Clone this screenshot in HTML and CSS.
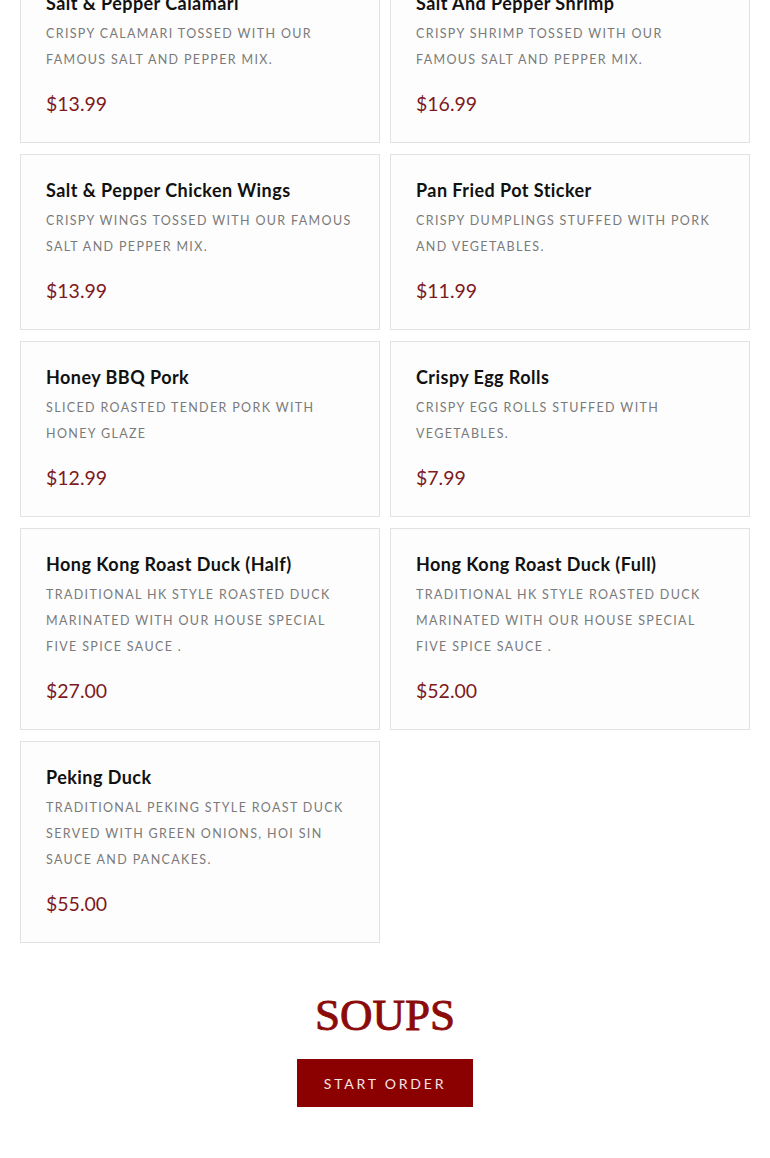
FILE: index.html
```html
<!DOCTYPE html>
<html lang="en">
<head>
<meta charset="utf-8">
<title>Menu</title>
<link rel="stylesheet" href="styles.css">
</head>
<body>
<main class="page">
  <section class="menu-grid">
    <article class="item">
      <h3 class="item-name">Salt &amp; Pepper Calamari</h3>
      <p class="item-desc">Crispy calamari tossed with our famous salt and pepper mix.</p>
      <p class="item-price">$13.99</p>
    </article>
    <article class="item">
      <h3 class="item-name">Salt And Pepper Shrimp</h3>
      <p class="item-desc">Crispy shrimp tossed with our famous salt and pepper mix.</p>
      <p class="item-price">$16.99</p>
    </article>
    <article class="item">
      <h3 class="item-name">Salt &amp; Pepper Chicken Wings</h3>
      <p class="item-desc">Crispy wings tossed with our famous salt and pepper mix.</p>
      <p class="item-price">$13.99</p>
    </article>
    <article class="item">
      <h3 class="item-name">Pan Fried Pot Sticker</h3>
      <p class="item-desc">Crispy dumplings stuffed with pork and vegetables.</p>
      <p class="item-price">$11.99</p>
    </article>
    <article class="item">
      <h3 class="item-name">Honey BBQ Pork</h3>
      <p class="item-desc">Sliced roasted tender pork with honey glaze</p>
      <p class="item-price">$12.99</p>
    </article>
    <article class="item">
      <h3 class="item-name">Crispy Egg Rolls</h3>
      <p class="item-desc">Crispy egg rolls stuffed with vegetables.</p>
      <p class="item-price">$7.99</p>
    </article>
    <article class="item">
      <h3 class="item-name">Hong Kong Roast Duck (Half)</h3>
      <p class="item-desc">Traditional HK style roasted duck marinated with our house special five spice sauce .</p>
      <p class="item-price">$27.00</p>
    </article>
    <article class="item">
      <h3 class="item-name">Hong Kong Roast Duck (Full)</h3>
      <p class="item-desc">Traditional HK style roasted duck marinated with our house special five spice sauce .</p>
      <p class="item-price">$52.00</p>
    </article>
    <article class="item">
      <h3 class="item-name">Peking Duck</h3>
      <p class="item-desc">Traditional Peking style roast duck served with green onions, hoi sin sauce and pancakes.</p>
      <p class="item-price">$55.00</p>
    </article>
  </section>
  <section class="next-section">
    <h2 class="section-title">SOUPS</h2>
    <a class="order-btn" href="#">START ORDER</a>
  </section>
</main>
</body>
</html>
```
FILE: styles.css
```css
* { box-sizing: border-box; }
html, body { margin: 0; padding: 0; background: #ffffff; }
body { font-family: "Lato", "Open Sans", sans-serif; color: #111; }
.page { padding: 0 20px; margin-top: -33px; }
.menu-grid {
  display: grid;
  grid-template-columns: 1fr 1fr;
  gap: 11px 10px;
}
.item {
  background: #fdfdfd;
  border: 1px solid #e2e2e2;
  padding: 22px 25px 23px;
}
.item-name {
  margin: 0 0 5px;
  font-size: 18px;
  line-height: 26px;
  font-weight: 700;
  letter-spacing: 0.45px;
  color: #111;
}
.item-desc {
  margin: 0;
  font-size: 12.5px;
  line-height: 26px;
  letter-spacing: 1.35px;
  text-transform: uppercase;
  color: #7a7a7a;
}
.item-price {
  margin: 16px 0 0;
  font-size: 19.5px;
  line-height: 30px;
  color: #7e1a1e;
}
.next-section {
  display: flex;
  flex-direction: column;
  align-items: center;
  padding-top: 44px;
}
.section-title {
  margin: 0;
  font-family: "Liberation Serif", "Times New Roman", serif;
  font-size: 45px;
  line-height: 56px;
  font-weight: 400;
  -webkit-text-stroke: 0.9px #8b0a0a;
  color: #8b0a0a;
}
.order-btn {
  margin-top: 16px;
  width: 176px;
  height: 48px;
  display: flex;
  align-items: center;
  justify-content: center;
  background: #8b0000;
  color: #f3e6e6;
  text-decoration: none;
  font-size: 14px;
  letter-spacing: 2.8px;
}
```
